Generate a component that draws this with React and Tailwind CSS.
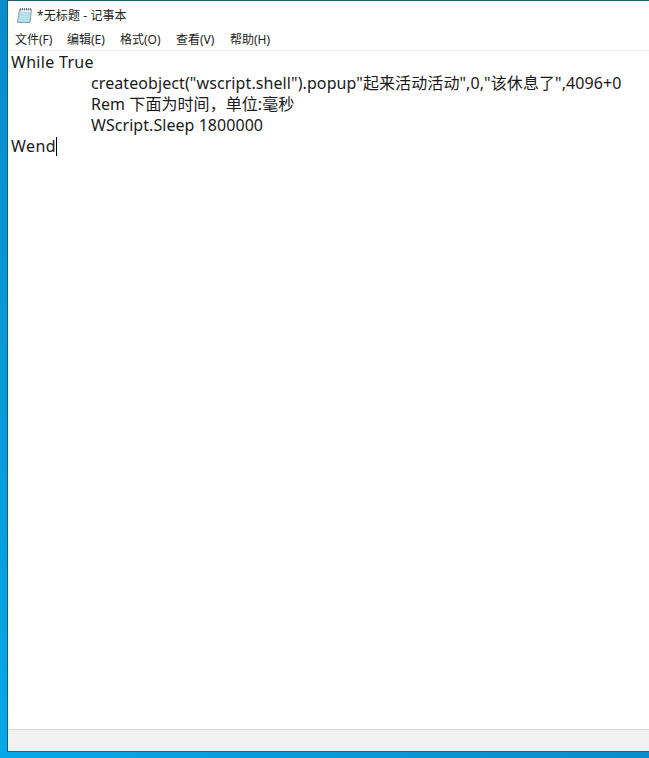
import React from 'react';

const menus = [
  { label: '文件(F)', w: 'w-[38px]' },
  { label: '编辑(E)', w: 'w-[39px]' },
  { label: '格式(O)', w: 'w-[42px]' },
  { label: '查看(V)', w: 'w-[40px]' },
  { label: '帮助(H)', w: 'w-[41px]' },
];
const cjk = "font-['Noto_Sans','Noto_Sans_CJK_SC',sans-serif]";

function NotepadIcon() {
  return (
    <svg width="17" height="17" viewBox="0 0 17 17" className="shrink-0">
      <path d="M3.5 2.5 H15.5 L14 15.5 H1.5 Z" fill="#a9d6e4" stroke="#8aa6b0" />
      <path d="M5 2.5 H15 L14.6 5 H4.6 Z" fill="#f4f8fa" />
      <path d="M3.6 7 L13.6 7 M3.3 9.2 L13.3 9.2 M3 11.4 L13.1 11.4 M2.8 13.6 L12.9 13.6" stroke="#d4edf4" strokeWidth="0.9" />
      <path d="M4.5 1 V3.5 M6.5 1 V3.5 M8.5 1 V3.5 M10.5 1 V3.5 M12.5 1 V3.5 M14.5 1 V3.5" stroke="#59666d" strokeWidth="0.9" />
    </svg>
  );
}

export default function App() {
  return (
    <div className={`h-[758px] w-[649px] overflow-hidden bg-[linear-gradient(to_top_right,#05a8e8,#0a8ccb_50%,#0a78b8)] pl-[7px] ${cjk}`}>
      <div className="flex h-[752px] flex-col border-b border-l border-t border-b-[#0d6a8c] border-l-[#12607e] border-t-[#1f5a70] bg-white text-black">
        <div className="flex h-[29px] items-center gap-[4px] pl-[8px] text-xs tracking-[0.1px] text-[#222]">
          <NotepadIcon />
          <span>*无标题 - 记事本</span>
        </div>
        <div className="flex h-[20px] items-center gap-[14px] pl-[7px] text-xs text-[#222]">
          {menus.map((m) => (
            <span key={m.label} className={`${m.w} whitespace-nowrap`}>{m.label}</span>
          ))}
        </div>
        <div className="h-px bg-[#ededed]" />
        <div className="flex-1 pl-[3px] pt-px text-base leading-[21px] text-[#1a1a1a]">
          <div className="tracking-[0.3px]">While True</div>
          <div className="whitespace-nowrap pl-[80px] tracking-[0.09px]">createobject("wscript.shell").popup"起来活动活动",0,"该休息了",4096+0</div>
          <div className="pl-[80px] tracking-[0.06px]">Rem 下面为时间，单位:毫秒</div>
          <div className="pl-[80px] tracking-[0.05px]">WScript.Sleep 1800000</div>
          <div className="flex items-center tracking-[0.4px]">
            Wend
            <span className="h-[19px] w-px bg-black" />
          </div>
        </div>
        <div className="h-[22px] border-t border-[#d9d9d9] bg-[#f0f0f0]" />
      </div>
    </div>
  );
}
